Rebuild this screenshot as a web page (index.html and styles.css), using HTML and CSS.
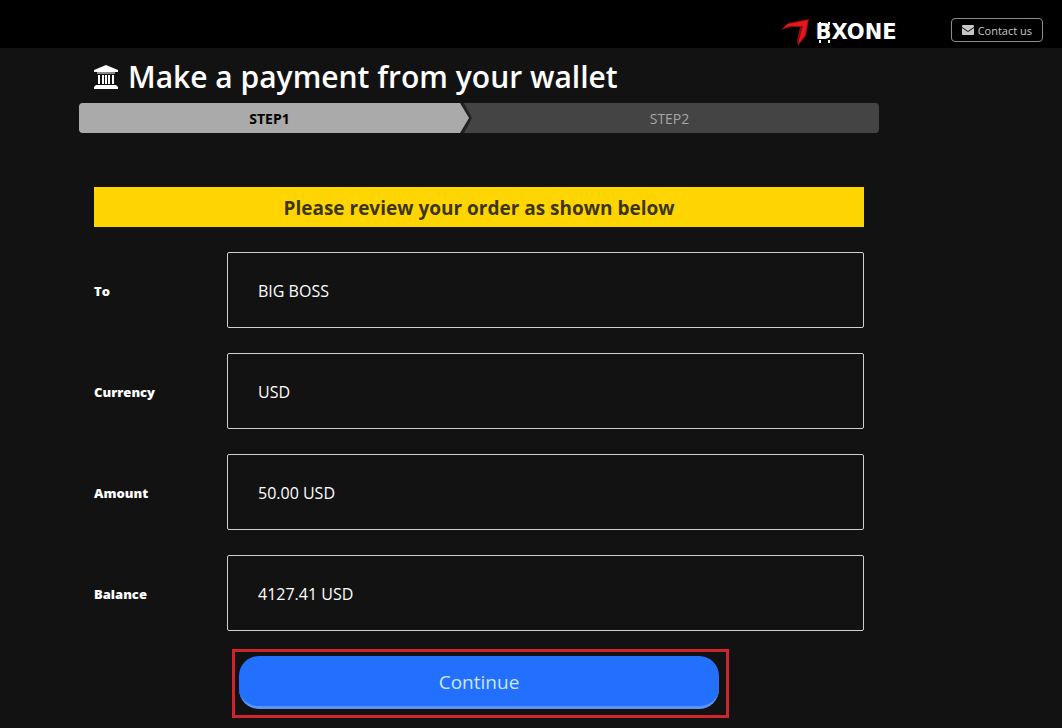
FILE: index.html
```html
<!DOCTYPE html>
<html lang="en">
<head>
<meta charset="utf-8">
<meta name="viewport" content="width=device-width, initial-scale=1">
<title>Make a payment from your wallet</title>
<link rel="stylesheet" href="styles.css">
</head>
<body>
<header class="topbar">
  <div class="brand">
    <svg class="brand-mark" viewBox="0 0 30 28" aria-hidden="true">
      <path fill="#8e0b0d" d="M0 12 7 5 28 1 25 18 17 28 16 23 19 9 10 9Z"/>
      <path fill="#e3171c" d="M2 10 7 6 27 2 24 17 18 25 18 22 22 8 9 8Z"/>
    </svg>
    <span class="brand-name">BXONE</span>
  </div>
  <a class="contact" href="#contact">
    <svg class="contact-icon" viewBox="0 0 12 10" aria-hidden="true">
      <path fill="currentColor" d="M1 0h10q1 0 1 1v1L6 6 0 2V1q0-1 1-1ZM0 3l6 4 6-4v6q0 1-1 1H1q-1 0-1-1Z"/>
    </svg>
    Contact us
  </a>
</header>
<main class="page">
  <h1 class="title">
    <svg class="title-icon" viewBox="0 0 24 24" aria-hidden="true">
      <path fill="currentColor" d="M12 0 24 5v2H0V5ZM4 10h2v9H4ZM8 10h2v9H8ZM14 10h2v9h-2ZM18 10h2v9h-2ZM11 10h2v9h-2ZM2 20h20l2 2v2H0v-2Z"/>
      <path fill="#8a8a8a" d="M3 7h18v2H3Z"/>
    </svg>
    Make a payment from your wallet
  </h1>
  <ol class="steps">
    <li class="step step-active" aria-current="step">STEP1</li>
    <li class="step">STEP2</li>
  </ol>
  <form class="order">
    <p class="notice">Please review your order as shown below</p>
    <div class="row">
      <label class="row-label" for="to">To</label>
      <input class="row-value" id="to" type="text" value="BIG BOSS" readonly>
    </div>
    <div class="row">
      <label class="row-label" for="currency">Currency</label>
      <input class="row-value" id="currency" type="text" value="USD" readonly>
    </div>
    <div class="row">
      <label class="row-label" for="amount">Amount</label>
      <input class="row-value" id="amount" type="text" value="50.00 USD" readonly>
    </div>
    <div class="row">
      <label class="row-label" for="balance">Balance</label>
      <input class="row-value" id="balance" type="text" value="4127.41 USD" readonly>
    </div>
    <div class="action">
      <button class="continue" type="submit">Continue</button>
    </div>
  </form>
</main>
</body>
</html>
```
FILE: styles.css
```css
* {
  box-sizing: border-box;
}

body {
  margin: 0;
  background: #121212;
  color: #fff;
  font-family: "Open Sans", "Noto Sans", sans-serif;
  font-size: 16px;
}

.topbar {
  display: flex;
  justify-content: flex-end;
  align-items: flex-start;
  gap: 54px;
  padding: 18px 19px 2px 16px;
  background: #000;
}

.brand {
  display: flex;
  align-items: center;
  gap: 4px;
}

.brand-mark {
  width: 30px;
  height: 28px;
}

.brand-name {
  position: relative;
  font-family: "DejaVu Sans", sans-serif;
  font-size: 21px;
  line-height: 24px;
  font-weight: 700;
}

/* Bitcoin ticks above and below the B */
.brand-name::before,
.brand-name::after {
  content: "";
  position: absolute;
  left: 4px;
  width: 7px;
  height: 3px;
  border: solid #fff;
  border-width: 0 2px;
}

.brand-name::before {
  top: 2px;
}

.brand-name::after {
  bottom: 1px;
}

.contact {
  display: flex;
  align-items: center;
  gap: 4px;
  height: 24px;
  padding: 0 10px;
  border: 1px solid #8c8c8c;
  border-radius: 4px;
  color: #c8c8c8;
  font-size: 11px;
  text-decoration: none;
}

.contact-icon {
  width: 12px;
  height: 10px;
}

.page {
  max-width: 800px;
  margin-left: 79px;
}

.title {
  display: flex;
  align-items: center;
  gap: 10px;
  margin: 0;
  padding: 9px 15px 6px;
  font-size: 30px;
  line-height: 40px;
  font-weight: 600;
}

.title-icon {
  width: 24px;
  height: 24px;
}

.steps {
  display: flex;
  margin: 0;
  padding: 0;
  overflow: hidden;
  border-radius: 4px;
  background: #444;
  list-style: none;
}

.step {
  position: relative;
  flex: 1;
  padding-top: 2px;
  color: #a6a6a6;
  font-size: 14px;
  line-height: 28px;
  text-align: center;
}

.step-active {
  flex: 0 0 381px;
  background: #aaa;
  color: #000;
  font-weight: 700;
}

/* Chevron: dark edge behind, step colour in front */
.step-active::before,
.step-active::after {
  content: "";
  position: absolute;
  top: 0;
  left: 100%;
  width: 12px;
  height: 100%;
  background: #222;
  clip-path: polygon(0 0, 4px 0, 100% 50%, 4px 100%, 0 100%);
}

.step-active::after {
  width: 9px;
  background: #aaa;
  clip-path: polygon(0 0, 100% 50%, 0 100%);
}

.order {
  display: flex;
  flex-direction: column;
  gap: 25px;
  padding: 54px 15px 19px;
}

.notice {
  margin: 0;
  padding-top: 2px;
  background: #ffd500;
  color: #3d3510;
  font-size: 19px;
  line-height: 38px;
  font-weight: 700;
  text-align: center;
}

.row {
  display: flex;
  align-items: center;
}

.row-label {
  flex: 0 0 133px;
  padding-top: 2px;
  font-size: 13px;
  font-weight: 800;
}

.row-value {
  flex: 1;
  min-width: 0;
  padding: 26px 30px 24px;
  border: 1px solid #d0d0d0;
  border-radius: 2px;
  background: transparent;
  color: #fff;
  font: inherit;
  line-height: 24px;
}

.action {
  position: relative;
  align-self: center;
  width: 100%;
  max-width: 480px;
}

/* Red highlight frame around the button */
.action::after {
  content: "";
  position: absolute;
  inset: -7px -10px -9px -7px;
  border: 3px solid #d0232b;
  pointer-events: none;
}

.continue {
  display: block;
  width: 100%;
  padding: 11px 16px 9px;
  border: 0;
  border-bottom: 3px solid #5c93f5;
  border-radius: 20px;
  background: #2370ff;
  color: #c9e6ff;
  font-family: inherit;
  font-size: 19px;
  line-height: 30px;
}
```
